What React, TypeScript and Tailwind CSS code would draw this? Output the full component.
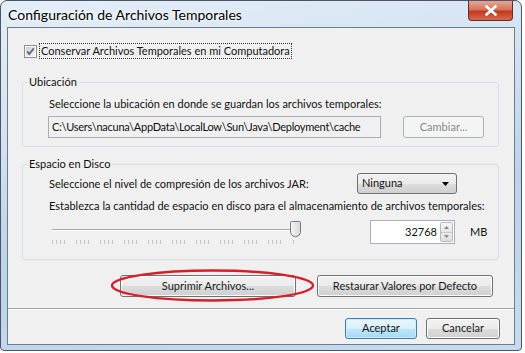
import React from 'react';

const font = "font-['Segoe_UI','Lato','Noto_Sans',sans-serif]";

const btn =
  'flex items-center justify-center rounded-[3px] border border-[#707070] bg-[linear-gradient(180deg,#f2f2f2_0%,#ebebeb_50%,#dddddd_51%,#cfcfcf_100%)] text-[11px] text-[#1a1a1a] shadow-[inset_0_0_0_1px_#fcfcfc]';

function CheckBox() {
  return (
    <svg width="13" height="13" viewBox="0 0 13 13">
      <defs>
        <linearGradient id="cbg" x1="0" y1="0" x2="1" y2="1">
          <stop offset="0" stopColor="#cbcfd5" />
          <stop offset="1" stopColor="#f6f6f6" />
        </linearGradient>
      </defs>
      <rect x="0.5" y="0.5" width="12" height="12" fill="#fff" stroke="#8f8f8f" />
      <rect x="2" y="2" width="9" height="9" fill="url(#cbg)" />
      <path d="M3.2 6.4 L5.3 9 L9.8 3.4" fill="none" stroke="#5a6a86" strokeWidth="1.8" />
    </svg>
  );
}

function Slider() {
  const ticks: number[] = [];
  for (let g = 0; g < 10; g++) {
    const x0 = 4 + g * 24;
    ticks.push(x0, x0 + 4, x0 + 8, x0 + 12);
  }
  ticks.push(245);
  return (
    <svg width="256" height="26" viewBox="0 0 256 26">
      <line x1="4" y1="9.5" x2="246" y2="9.5" stroke="#a8a8a8" />
      <line x1="4" y1="10.5" x2="246" y2="10.5" stroke="#ffffff" />
      {ticks.map((t, i) => (
        <line key={i} x1={t + 0.5} y1="20" x2={t + 0.5} y2="24" stroke="#c4c4c4" />
      ))}
      <defs>
        <linearGradient id="thumb" x1="0" y1="0" x2="1" y2="0">
          <stop offset="0" stopColor="#f4f4f4" />
          <stop offset="1" stopColor="#d8d8d8" />
        </linearGradient>
      </defs>
      <path
        d="M243.5 1.5 h8 a1 1 0 0 1 1 1 v10 q0 3 -5 4.5 q-5 -1.5 -5 -4.5 v-10 a1 1 0 0 1 1 -1 z"
        fill="url(#thumb)"
        stroke="#7a7a7a"
      />
    </svg>
  );
}

export default function App() {
  return (
    <div className={`w-[525px] h-[353px] bg-white ${font}`}>
      <div className="w-[522px] h-[351px] rounded-t-[7px] rounded-b-[4px] border border-[#4b5563] bg-[linear-gradient(170deg,#e4eef8_0%,#d3e3f2_30%,#bcd3ea_60%,#c7dbef_100%)] flex flex-col">
        {/* Title bar */}
        <div className="h-[26px] flex justify-between pl-[7px] pr-[8px]">
          <span className="text-[14px] leading-[27px] text-black [text-shadow:0_0_6px_#ffffff,0_0_3px_#ffffff]">
            Configuración de Archivos Temporales
          </span>
          <div className="w-[45px] h-[20px] rounded-b-[4px] border border-t-0 border-[#6b2a20] bg-[linear-gradient(180deg,#e6a795_0%,#d6725b_45%,#c2391d_55%,#d46a4f_100%)] flex items-center justify-center">
            <svg width="12" height="11" viewBox="0 0 12 11">
              <path d="M1.5 1.5 L10.5 9.5 M10.5 1.5 L1.5 9.5" stroke="#ffffff" strokeWidth="2.6" strokeLinecap="square" />
            </svg>
          </div>
        </div>

        {/* Client area */}
        <div className="mx-[6px] h-[318px] border border-[#6d7c8c] bg-[#f0f0f0] flex flex-col px-[14px] pt-[16px] pb-[6px] text-[11px] text-[#111]">
          <label className="flex items-center gap-[3px] pl-[2px] h-[15px]">
            <CheckBox />
            <span className="outline outline-1 outline-dotted outline-[#333] leading-[14px] px-[1px]">
              Conservar Archivos Temporales en mi Computadora
            </span>
          </label>

          <fieldset className="mt-[16px] w-[477px] min-w-0 border border-[#d5dfe5] rounded-[3px] pl-[25px] pb-[8px]">
            <legend className="ml-[-21px] px-[2px] leading-[16px]">Ubicación</legend>
            <div className="mt-[6px] leading-[16px] pl-[1px]">
              Seleccione la ubicación en donde se guardan los archivos temporales:
            </div>
            <div className="mt-[4px] flex items-center gap-[22px]">
              <div className="w-[333px] h-[22px] border border-[#abadb3] bg-[#f0f0f0] flex items-center pl-[3px] whitespace-nowrap overflow-hidden tracking-[-0.25px]">
                C:\Users\nacuna\AppData\LocalLow\Sun\Java\Deployment\cache
              </div>
              <div className="w-[81px] h-[22px] rounded-[3px] border border-[#adb2b5] bg-[#f4f4f4] flex items-center justify-center text-[#8a8a8a]">
                Cambiar...
              </div>
            </div>
          </fieldset>

          <fieldset className="mt-[9px] w-[477px] min-w-0 border border-[#d5dfe5] rounded-[3px] pl-[25px] pb-[15px]">
            <legend className="ml-[-21px] px-[2px] leading-[16px]">Espacio en Disco</legend>
            <div className="mt-[1px] flex items-center h-[21px]">
              <span className="w-[309px] pl-[1px] leading-[16px]">
                Seleccione el nivel de compresión de los archivos JAR:
              </span>
              <div className="w-[100px] h-[21px] rounded-[3px] border border-[#707070] bg-[linear-gradient(180deg,#f2f2f2_0%,#ebebeb_50%,#dddddd_51%,#cfcfcf_100%)] flex items-center justify-between pl-[4px] pr-[7px]">
                <span>Ninguna</span>
                <svg width="7" height="4" viewBox="0 0 7 4">
                  <path d="M0 0 H7 L3.5 4 Z" fill="#000" />
                </svg>
              </div>
            </div>
            <div className="mt-[4px] leading-[16px] pl-[1px] whitespace-nowrap">
              Establezca la cantidad de espacio en disco para el almacenamiento de archivos temporales:
            </div>
            <div className="mt-[6px] flex items-start h-[24px]">
              <Slider />
              <div className="ml-[66px] w-[85px] h-[24px] border border-[#abadb3] bg-white flex items-center justify-end pr-[1px]">
                <span className="mr-[3px]">32768</span>
                <div className="w-[13px] h-[20px] flex flex-col border border-[#b9b9b9] rounded-[2px]">
                  <div className="flex-1 flex items-center justify-center bg-[linear-gradient(180deg,#f6f6f6,#e4e4e4)] border-b border-[#c9c9c9]">
                    <svg width="5" height="3" viewBox="0 0 5 3"><path d="M0 3 L2.5 0 L5 3 Z" fill="#888" /></svg>
                  </div>
                  <div className="flex-1 flex items-center justify-center bg-[linear-gradient(180deg,#ececec,#dcdcdc)]">
                    <svg width="5" height="3" viewBox="0 0 5 3"><path d="M0 0 L5 0 L2.5 3 Z" fill="#888" /></svg>
                  </div>
                </div>
              </div>
              <span className="ml-[15px] leading-[24px]">MB</span>
            </div>
          </fieldset>

          <div className="mt-[15px] flex justify-end gap-[21px] pr-[7px] relative">
            <div className={`${btn} w-[176px] h-[22px]`}>Suprimir Archivos...</div>
            <div className={`${btn} w-[176px] h-[22px]`}>Restaurar Valores por Defecto</div>
            <svg
              className="absolute left-[88px] top-[-7px]"
              width="205"
              height="35"
              viewBox="0 0 205 35"
            >
              <ellipse cx="102.5" cy="17.5" rx="100.5" ry="15" fill="none" stroke="#d4202a" strokeWidth="2.4" />
            </svg>
          </div>

          <div className="mt-[11px] mx-[-14px] border-t border-[#a0a0a0] border-b border-b-white" />

          <div className="mt-[8px] flex justify-end gap-[9px]">
            <div className="w-[72px] h-[21px] flex items-center justify-center rounded-[3px] border border-[#3c7fb1] bg-[linear-gradient(180deg,#eaf6fd_0%,#d9f0fc_50%,#bee6fd_51%,#a7d9f5_100%)] shadow-[inset_0_0_0_1px_#d0ecfb]">
              Aceptar
            </div>
            <div className={`${btn} w-[74px] h-[21px]`}>Cancelar</div>
          </div>
        </div>
      </div>
    </div>
  );
}
